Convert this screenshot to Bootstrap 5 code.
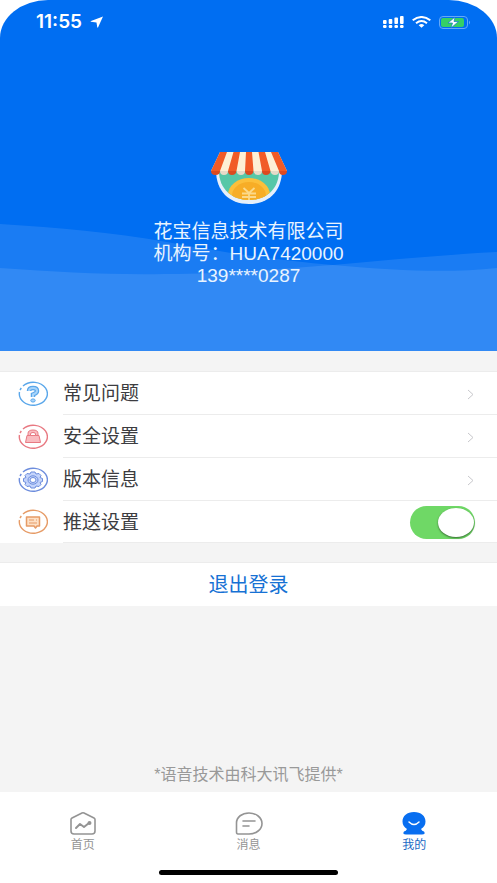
<!DOCTYPE html>
<html lang="zh-CN">
<head>
<meta charset="utf-8">
<meta name="viewport" content="width=device-width, initial-scale=1">
<title>我的</title>
<link href="https://cdn.jsdelivr.net/npm/bootstrap@5.3.0/dist/css/bootstrap.min.css" rel="stylesheet">
<style>
body { font-family: "Liberation Sans", "Noto Sans CJK SC", sans-serif; background: #fff; color: #3c3c40; }
.hero { background: #006ef2; border-radius: 48px 48px 0 0 / 38px 38px 0 0; height: 351px; color: #e9f4ff; }
.waves { height: 130px; z-index: 0; }
.hero-body { z-index: 1; }
.status { height: 44px; padding: 0 26px 0 36px; }
.clock { font: 600 19px/20px Inter, sans-serif; color: #fff; }
.profile { padding-top: 107px; font-size: 19px; line-height: 22px; }
.profile svg { margin-bottom: 16px; }
.panel { background: #f4f4f4; }
.group { background: #fff; border-top: 1px solid #ececec; margin-top: 20px; }
.group + .group { margin-top: 19px; }
.entry { height: 43px; padding-left: 18px; color: #3c3c40; font-size: 19px; line-height: 24px; text-decoration: none; }
.entry:last-child { height: 42px; }
.entry-text { margin-left: 15px; padding: 2px 22px 0 0; border-bottom: 1px solid #ececec; }
.toggle { appearance: none; position: relative; width: 65px; height: 33px; margin: 0; border-radius: 17px; background: #c9c9cc; }
.toggle:checked { background: #6fd866; }
.toggle::before { content: ""; position: absolute; top: 2px; left: 1px; width: 36px; height: 29px; border-radius: 50%; background: #fff; box-shadow: 0 1px 2px #00000080; }
.toggle:checked::before { left: 28px; }
.logout { height: 43px; font-size: 20px; line-height: 24px; color: #1671d4; background: #fff; }
.credit { font-size: 16px; line-height: 20px; color: #999; padding-bottom: 7px; }
.tabs { height: 70px; padding-top: 19px; }
.tab { color: #949494; font-size: 12px; line-height: 16px; text-decoration: none; }
.tab svg { margin-bottom: 1px; }
.tab.active { color: #1a68c4; }
.home-bar { width: 36%; height: 5px; margin: 8px auto 8px; background: #000; }
</style>
<script src="https://cdn.jsdelivr.net/npm/bootstrap@5.3.0/dist/js/bootstrap.bundle.min.js"></script>
</head>
<body class="d-flex flex-column min-vh-100">
<header class="hero position-relative overflow-hidden">
  <svg class="waves position-absolute bottom-0 start-0 w-100" viewBox="0 0 497 130" preserveAspectRatio="none" fill="#fff" fill-opacity=".1" aria-hidden="true">
    <path d="M0 3C60 7 110 11 167 21C230 33 280 39 333 44C400 50 450 52 497 47V130H0Z"/>
    <path d="M0 47C60 51 110 54 165 53C230 53 290 47 333 44C390 39 440 34 497 31V130H0Z"/>
  </svg>
  <div class="hero-body position-relative">
    <div class="status d-flex align-items-center justify-content-between">
      <div class="d-flex align-items-center gap-2">
        <span class="clock">11:55</span>
        <svg width="14" height="12" viewBox="0 0 14 12" fill="#fff" aria-hidden="true"><path d="M13 .5L8 11.500Q7.500 12 7.200 11L6.500 6.500L1 5.800Q0 5.500 1 5Z"/></svg>
      </div>
      <div class="d-flex align-items-center gap-2">
        <svg width="21" height="12" viewBox="0 0 21 12" fill="#fff" aria-hidden="true"><rect y="4" width="3.600" height="4" rx="1"/><rect x="5.700" y="3" width="3.600" height="5" rx="1"/><rect x="11.400" y="1.500" width="3.600" height="6.500" rx="1"/><rect x="17" width="3.600" height="8" rx="1"/><rect y="9" width="3.600" height="3" rx="1.200"/><rect x="5.700" y="9" width="3.600" height="3" rx="1.200"/><rect x="11.400" y="9" width="3.600" height="3" rx="1.200"/><rect x="17" y="9" width="3.600" height="3" rx="1.200"/></svg>
        <svg width="19" height="12" viewBox="0 0 19 12" fill="none" stroke="#fff" stroke-width="2" aria-hidden="true"><path d="M.700 4.300Q9.500-2.300 18.300 4.300M4 7.200Q9.500 2.800 15 7.200"/><path d="M6.700 9.200Q9.500 7 12.300 9.200L9.500 11.800Z" fill="#fff" stroke="none"/></svg>
        <svg width="32" height="13" viewBox="0 0 32 13" aria-hidden="true"><rect x=".5" y=".5" width="28" height="12" rx="3.500" fill="none" stroke="#65a9f8"/><rect x="2" y="2" width="23" height="9" rx="2" fill="#35cf65"/><path d="M30 4.500Q32 6.500 30 8.500Z" fill="#65a9f8"/><path d="M16 1L9 7h4.500L12 12L19.500 5.500H15Z" fill="#fff" stroke="#1378c9" stroke-width=".7"/></svg>
      </div>
    </div>
    <div class="profile text-center">
      <svg class="d-block mx-auto" width="78" height="54" viewBox="0 0 78 54" aria-hidden="true">
        <defs><clipPath id="bowl"><path d="M9 20H69C69 38 56 49 39 49S9 38 9 20Z"/></clipPath></defs>
        <path d="M6 19H72C72 40 59 53 39 53S6 40 6 19Z" fill="#e6effa"/>
        <g clip-path="url(#bowl)"><path d="M0 15H78V54H0Z" fill="#56c7a7"/><ellipse cx="39" cy="44" rx="21" ry="17" fill="#fcbf3a"/><ellipse cx="39" cy="45" rx="17" ry="14" fill="#f7ad26"/><path d="M33.500 37L39 42L44.500 37M32 42.500H46M32 46H46M39 42V52" fill="none" stroke="#fbd98a" stroke-width="1.800"/></g>
        <path d="M10 1H68L77 20H1Z" fill="#fdf0d5"/>
        <path d="M10 1H17L10 20H1ZM23.500 1H30L26.500 20H18ZM36 1H42L43.500 20H35ZM48.500 1H55L60.500 20H52ZM61 1H68L77 20H69Z" fill="#f15b27"/>
        <path d="M1 20H10Q10 24 5.500 24T1 20ZM18 20H26.500Q26 24 22 24T18 20ZM35 20H43.500Q43 24 39 24T35 20ZM52 20H60.500Q60 24 56 24T52 20ZM69 20H77Q77 24 73 24T69 20Z" fill="#db4a20"/>
        <path d="M10 20H18Q18 24 14 24T10 20ZM26.500 20H35Q35 24 31 24T26.500 20ZM43.500 20H52Q52 24 48 24T43.500 20ZM60.500 20H69Q69 24 65 24T60.500 20Z" fill="#e7dac8"/>
      </svg>
      <div>花宝信息技术有限公司</div>
      <div>机构号：HUA7420000</div>
      <div>139****0287</div>
    </div>
  </div>
</header>
<main class="panel flex-grow-1 d-flex flex-column">
  <div class="group">
    <a href="#faq" class="entry d-flex align-items-center">
      <svg width="30" height="26" viewBox="0 0 30 26" fill="none" stroke="#5aa7ea" aria-hidden="true"><path d="M5 5A14 11.500 0 1 1 1.500 11M2 9L3.300 7" stroke-width="1.400"/><path d="M11 10Q11 7 15 7T19 10Q19 12 15 13.500V16" stroke-width="4.500"/><path d="M11 10Q11 7 15 7T19 10Q19 12 15 13.500V16" stroke="#a8d4fa" stroke-width="2"/><ellipse cx="15" cy="19.500" rx="2.200" ry="1.600" fill="#a8d4fa"/></svg>
      <span class="entry-text flex-grow-1 align-self-stretch d-flex align-items-center justify-content-between">常见问题<svg width="8" height="11" viewBox="0 0 8 11" fill="none" stroke="#c8c8cc" aria-hidden="true"><path d="M1 1L6 5.500L1 10"/></svg></span>
    </a>
    <a href="#security" class="entry d-flex align-items-center">
      <svg width="30" height="26" viewBox="0 0 30 26" fill="none" stroke="#e87982" aria-hidden="true"><path d="M5 5A14 11.500 0 1 1 1.500 11M2 9L3.300 7" stroke-width="1.400"/><path d="M10 12V9.500Q10 6 15 6T20 9.500V12Z" fill="#f9bbc0"/><path d="M9 11.500H21L22.500 18.500H7.500Z" fill="#f9bbc0" stroke-linejoin="round"/><path d="M12.500 11.500V10Q12.500 8.500 15 8.500T17.500 10V11.500Z" fill="#fff"/></svg>
      <span class="entry-text flex-grow-1 align-self-stretch d-flex align-items-center justify-content-between">安全设置<svg width="8" height="11" viewBox="0 0 8 11" fill="none" stroke="#c8c8cc" aria-hidden="true"><path d="M1 1L6 5.500L1 10"/></svg></span>
    </a>
    <a href="#version" class="entry d-flex align-items-center">
      <svg width="30" height="26" viewBox="0 0 30 26" fill="none" stroke="#6d8ddd" aria-hidden="true"><path d="M5 5A14 11.500 0 1 1 1.500 11M2 9L3.300 7" stroke-width="1.400"/><path d="M13 5H17L18 7L21 6.500L23 8.500L22 10.500L24.500 11.500V14.500L22 15.500L23 17.500L21 19.500L18 19L17 21H13L12 19L9 19.500L7 17.500L8 15.500L5.500 14.500V11.500L8 10.500L7 8.500L9 6.500L12 7Z" fill="#c4d4fb"/><ellipse cx="15" cy="13" rx="5" ry="4.200"/><ellipse cx="15" cy="13" rx="3" ry="2.500" fill="#fff"/></svg>
      <span class="entry-text flex-grow-1 align-self-stretch d-flex align-items-center justify-content-between">版本信息<svg width="8" height="11" viewBox="0 0 8 11" fill="none" stroke="#c8c8cc" aria-hidden="true"><path d="M1 1L6 5.500L1 10"/></svg></span>
    </a>
    <div class="entry d-flex align-items-center">
      <svg width="30" height="26" viewBox="0 0 30 26" fill="none" stroke="#e69b66" aria-hidden="true"><path d="M5 5A14 11.500 0 1 1 1.500 11M2 9L3.300 7" stroke-width="1.400"/><path d="M8.500 8H21.500V17H19L17.500 19L16 17H8.500Z" fill="#fde0c6" stroke-width="1.500" stroke-linejoin="round"/><path d="M11 11H16M11 14H19M18 11H19"/></svg>
      <div class="entry-text flex-grow-1 align-self-stretch d-flex align-items-center justify-content-between"><label for="push">推送设置</label><input class="toggle" type="checkbox" role="switch" id="push" checked></div>
    </div>
  </div>
  <div class="group"><button type="button" class="logout btn border-0 rounded-0 w-100 p-0">退出登录</button></div>
  <p class="credit text-center mt-auto mb-0">*语音技术由科大讯飞提供*</p>
</main>
<footer class="bg-white">
  <nav class="tabs row g-0 text-center">
    <a href="#home" class="tab col"><svg class="d-block mx-auto" width="28" height="25" viewBox="0 0 28 25" fill="none" stroke="#949494" stroke-width="1.600" stroke-linejoin="round" stroke-linecap="round" aria-hidden="true"><path d="M2 8.500Q2 7.500 3 7L13 2Q14 1.500 15 2L25 7Q26 7.500 26 8.500V20Q26 23 23 23H5Q2 23 2 20Z"/><path d="M7 17L11 13L15 16L20 12" stroke-width="2"/><circle cx="20.500" cy="12" r="1.200" fill="#949494"/></svg>首页</a>
    <a href="#messages" class="tab col"><svg class="d-block mx-auto" width="28" height="25" viewBox="0 0 28 25" fill="none" stroke="#949494" stroke-width="1.600" stroke-linecap="round" aria-hidden="true"><path d="M3 23Q1.500 23 1.500 21V12C1.500 6 7 2 14 2S27 6.500 27 12.500S21 23 14 23Z"/><path d="M8 10H20M8 15H14"/></svg>消息</a>
    <a href="#me" class="tab active col" aria-current="page"><svg class="d-block mx-auto" width="28" height="25" viewBox="0 0 28 25" aria-hidden="true"><path d="M14 1C21 1 25.500 5 25.500 10.500Q25.500 15 21 18Q22 20 24 20.500Q26 23.500 22 23.500H6Q2 23.500 4 20.500Q6 20 7 18Q2.500 15 2.500 10.500C2.500 5 7 1 14 1Z" fill="#086ef0"/><path d="M9 11Q14 16 19 11" fill="none" stroke="#fff" stroke-width="1.500" stroke-linecap="round"/></svg>我的</a>
  </nav>
  <div class="home-bar rounded-pill"></div>
</footer>
</body>
</html>
